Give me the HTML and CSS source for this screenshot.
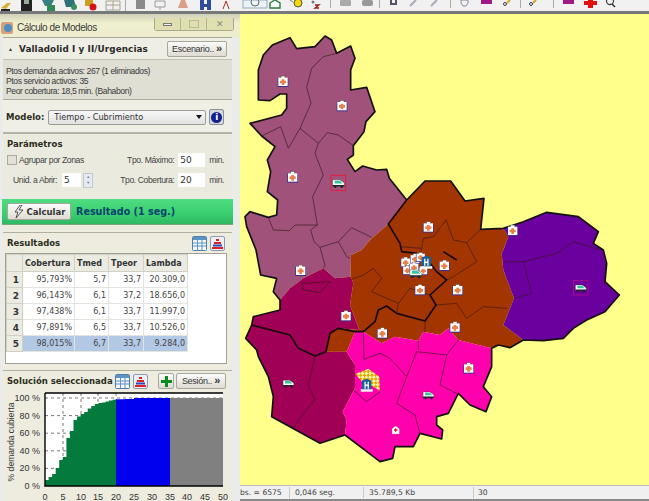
FILE: index.html
```html
<!DOCTYPE html>
<html lang="es">
<head>
<meta charset="utf-8">
<title>Cálculo de Modelos</title>
<link rel="stylesheet" href="styles.css">
</head>
<body>
<svg class="defs" width="0" height="0" aria-hidden="true">
  <defs>
    <symbol id="bag" viewBox="0 0 36 36">
      <rect x="12" y="1" width="12" height="8" fill="#fff" stroke="#554" stroke-width="2"/>
      <rect x="2" y="7" width="32" height="27" fill="#3a2f8a"/>
      <rect x="4" y="6" width="28" height="25" fill="#fff"/>
      <path d="M14 11h8v4h5v8h-5v5h-8v-5H9v-8h5z" fill="#e8804a"/>
    </symbol>
    <symbol id="amb" viewBox="0 0 44 36">
      <path d="M3 8h24l12 8 3 5v8H3z" fill="#fff" stroke="#333" stroke-width="1.5"/>
      <path d="M10 11h18l8 9H10z" fill="#35c49a"/>
      <path d="M3 25h39v5H3z" fill="#223"/>
      <circle cx="12" cy="31" r="4" fill="#222"/><circle cx="33" cy="31" r="4" fill="#222"/>
    </symbol>
    <symbol id="hosp" viewBox="0 0 40 44">
      <rect x="1" y="34" width="38" height="8" fill="#fff"/>
      <path d="M5 34V7l15-6 15 6v27z" fill="#1c5f94"/>
      <path d="M13 11h4v8h6v-8h4v22h-4v-9h-6v9h-4z" fill="#fff"/>
    </symbol>
    <pattern id="check" width="16" height="16" patternUnits="userSpaceOnUse" patternTransform="rotate(45)">
      <rect width="16" height="16" fill="#fff6b0"/>
      <rect width="8" height="8" fill="#e0a800"/>
      <rect x="8" y="8" width="8" height="8" fill="#e0a800"/>
    </pattern>
    <symbol id="grid" viewBox="0 0 15 15">
      <rect x=".5" y=".5" width="14" height="14" rx="1" fill="#f4f6fa" stroke="#4d7fa8"/>
      <rect x="1" y="1" width="13" height="3" fill="#5d93c4"/>
      <path d="M1 7h13M1 10h13M5.500 4v10M10 4v10" stroke="#5d93c4"/>
    </symbol>
    <symbol id="pyr" viewBox="0 0 15 15">
      <rect x=".5" y=".5" width="14" height="14" rx="1.500" fill="#eef0f6" stroke="#8c9ab0"/>
      <path d="M6 3h3v2H6zM4 6h7v2H4z" fill="#d22"/><path d="M3 8.500h9v2H3z" fill="#2a46b8"/><path d="M2 11h11v2H2z" fill="#d22"/>
    </symbol>
  </defs>
</svg>

<header class="toolbar">
  <svg class="toolbar-art" width="649" height="11" viewBox="0 0 649 11" aria-hidden="true">
    <path d="M1 8l6-5h4l-5 6z" fill="#d8b030"/><path d="M1 9h9v2H1z" fill="#222"/>
    <rect x="21" y="0" width="11" height="11" fill="#222"/><rect x="24" y="0" width="5" height="4" fill="#9a9"/>
    <path d="M42 0h12l-3 6h-6z" fill="#3a7f7f"/><rect x="47" y="5" width="8" height="6" fill="#2e8a55"/>
    <path d="M64 0h10l2 7H66z" fill="#2f6f7a"/><circle cx="74" cy="7" r="3" fill="#3a8f60"/>
    <path d="M85 0h8v6h-8z" fill="#c9a020"/><circle cx="93" cy="7" r="3.500" fill="#d31414"/>
    <path d="M106 1h14v9h-14zM106 5h14M113 1v9" fill="none" stroke="#a9a290"/>
    <rect x="125" y="0" width="1" height="11" fill="#aaa"/>
    <rect x="136" y="0" width="9" height="9" fill="#8a8a8a"/>
    <path d="M155 1h10v6h-10zM160 7v3" fill="none" stroke="#9a9a9a"/>
    <path d="M178 8l3-8h4l3 8z" fill="#d8a08a"/>
    <path d="M200 0h4v4h3V0h4v10h-4V7h-3v3h-4z" fill="#2d4d9c"/>
    <path d="M223 9l3-8 3 8" fill="none" stroke="#a03030"/>
    <rect x="243" y="0" width="24" height="8" fill="#eaf2fa" stroke="#98a8b8"/><circle cx="255" cy="2" r="4" fill="none" stroke="#666"/>
    <path d="M270 3l5-3 5 3v5h-10z" fill="#fff" stroke="#2b7a3d" stroke-width="1.400"/>
    <circle cx="298" cy="3" r="4" fill="#f0d800" stroke="#555"/><path d="M290 0l3 2" stroke="#777"/>
    <path d="M315 5h4l-4 3h4" fill="none" stroke="#a01818" stroke-width="1.300"/><circle cx="313" cy="2" r="1.500" fill="#777"/>
    <rect x="330" y="0" width="1" height="8" fill="#aaa"/>
    <rect x="340" y="0" width="11" height="6" rx="1" fill="#aaa"/><rect x="362" y="0" width="11" height="6" rx="2" fill="#999"/>
    <rect x="379" y="0" width="1" height="8" fill="#aaa"/>
    <path d="M390 0h2v3h3V0h2v5h-7z" fill="#556"/><path d="M410 6l6-6M431 6l6-6" stroke="#aab" stroke-width="2"/>
    <rect x="450" y="0" width="1" height="8" fill="#aaa"/>
    <path d="M461 0h7v3l-2 3h-3l-2-3z" fill="none" stroke="#889"/>
    <path d="M481 0h11v4h-11z" fill="#a0188a"/><circle cx="505" cy="4" r="1.500" fill="none" stroke="#444"/><path d="M507 3l3-3" stroke="#e0a030" stroke-width="2"/>
    <rect x="520" y="0" width="1" height="8" fill="#aaa"/>
    <circle cx="531" cy="4" r="1.500" fill="none" stroke="#246"/><path d="M533 3l3-3" stroke="#e0a030" stroke-width="2"/>
    <rect x="553" y="0" width="1" height="8" fill="#aaa"/>
    <path d="M563 0h11v4h-11z" fill="#a0188a"/>
    <path d="M588 0h5v1h4v4h-4v3h-5V5h-4V1h4z" fill="#e01010"/>
    <circle cx="610" cy="1" r="3.500" fill="none" stroke="#444" stroke-width="1.300"/><path d="M612 4l3 3" stroke="#333" stroke-width="1.600"/>
  </svg>
</header>

<div class="workspace">
  <aside class="panel">
    <div class="titlebar">
      <svg class="title-icon" width="12" height="12" viewBox="0 0 12 12" aria-hidden="true"><rect width="12" height="12" rx="2" fill="#d8a080"/><circle cx="7" cy="6" r="4" fill="#4f8fc0"/></svg>
      <span class="title-text">Cálculo de Modelos</span>
      <div class="window-buttons">
        <span class="wbtn"><i class="wmin"></i></span>
        <span class="wbtn"><i class="wmax"></i></span>
        <span class="wbtn wclose">&#10005;</span>
      </div>
    </div>
    <div class="panel-body">
      <section class="scenario">
        <div class="scenario-head">
          <span class="collapse">&#9650;</span>
          <strong class="scenario-name">Valladolid I y II/Urgencias</strong>
          <button class="btn btn-scenario">Escenario.. <b>&raquo;</b></button>
        </div>
        <div class="scenario-info">
          <div>Ptos demanda activos: 267 (1 eliminados)</div>
          <div>Ptos servicio activos: 35</div>
          <div>Peor cobertura: 18,5 min. (Bahabon)</div>
        </div>
      </section>

      <div class="model-row">
        <strong class="heading">Modelo:</strong>
        <div class="select"><span>Tiempo - Cubrimiento</span><i class="caret"></i></div>
        <span class="info-btn"><span class="info-dot">i</span></span>
      </div>

      <section class="params">
        <strong class="heading">Parámetros</strong>
        <div class="param-row">
          <label class="check"><i class="box"></i>Agrupar por Zonas</label>
          <span class="param-right"><span>Tpo. Máximo:</span><span class="input">50</span><span>min.</span></span>
        </div>
        <div class="param-row">
          <span class="unid">
            <span>Unid. a Abrir:</span><span class="input input-small">5</span>
            <span class="spin"><i>&#9650;</i><i>&#9660;</i></span>
          </span>
          <span class="param-right"><span>Tpo. Cobertura:</span><span class="input">20</span><span>min.</span></span>
        </div>
      </section>

      <div class="run-band">
        <button class="btn btn-run">
          <svg width="11" height="13" viewBox="0 0 11 13" aria-hidden="true"><path d="M7 0L2 7h3l-2 6 7-8H6l3-5z" fill="#eee" stroke="#333" stroke-width=".8"/></svg>
          Calcular
        </button>
        <strong class="run-result">Resultado (1 seg.)</strong>
      </div>

      <section class="results">
        <div class="section-head">
          <strong class="heading">Resultados</strong>
          <span class="icon-pair">
            <svg class="ico" viewBox="0 0 15 15"><use href="#grid"/></svg>
            <svg class="ico" viewBox="0 0 15 15"><use href="#pyr"/></svg>
          </span>
        </div>
        <div class="table-wrap">
          <table class="results-table">
            <thead>
              <tr><th class="rowh"></th><th class="c1">Cobertura</th><th class="c2">Tmed</th><th class="c3">Tpeor</th><th class="c4">Lambda</th></tr>
            </thead>
            <tbody>
              <tr><th class="rowh">1</th><td>95,793%</td><td>5,7</td><td>33,7</td><td>20.309,0</td></tr>
              <tr><th class="rowh">2</th><td>96,143%</td><td>6,1</td><td>37,2</td><td>18.656,0</td></tr>
              <tr><th class="rowh">3</th><td>97,438%</td><td>6,1</td><td>33,7</td><td>11.997,0</td></tr>
              <tr><th class="rowh">4</th><td>97,891%</td><td>6,5</td><td>33,7</td><td>10.526,0</td></tr>
              <tr class="selected"><th class="rowh">5</th><td>98,015%</td><td>6,7</td><td>33,7</td><td>9.284,0</td></tr>
            </tbody>
          </table>
        </div>
      </section>

      <section class="solution">
        <div class="solution-head">
          <strong class="heading">Solución seleccionada</strong>
          <svg class="ico" viewBox="0 0 15 15"><use href="#grid"/></svg>
          <svg class="ico" viewBox="0 0 15 15"><use href="#pyr"/></svg>
          <span class="btn btn-plus"><svg width="11" height="11" viewBox="0 0 11 11" aria-hidden="true"><path d="M4 0h3v4h4v3H7v4H4V7H0V4h4z" fill="#0b8a1e"/></svg></span>
          <button class="btn btn-session">Sesión.. <b>&raquo;</b></button>
        </div>
        <svg class="chart" width="232" height="111" viewBox="0 0 232 111">
          <rect x="45" y="3" width="178" height="93" fill="#fff"/>
          <path d="M45 8H223M45 25.600H223M45 43.200H223M45 60.800H223M45 78.400H223M63 3V96M81 3V96M98 3V96M116 3V96" stroke="#555" stroke-dasharray="3 3" stroke-width=".8" fill="none"/>
          <path d="M45 96V90H48.600V87H52.100V84H55.700V78H59.200V70H62.800V67H66.400V48H69.900V41H73.500V30H77V26.500H80.600V24H84.200V22H87.700V18.500H91.300V16H94.800V14H98.400V13H102V12.400H105.500V11.500H109V10.600H112.600V9.800H116V96z" fill="#047a3c"/>
          <path d="M116 96V9.300H125V9H134V8H170V96z" fill="#0000ee"/>
          <rect x="170" y="8" width="53" height="88" fill="#808080"/>
          <path d="M45 3H223M45 3V96H223" fill="none" stroke="#000" stroke-width="1.400"/>
          <g class="chart-y">
            <text x="40" y="11">100 %</text><text x="40" y="29">80 %</text><text x="40" y="46">60 %</text>
            <text x="40" y="64">40 %</text><text x="40" y="81">20 %</text><text x="40" y="99">0 %</text>
          </g>
          <g class="chart-x">
            <text x="45" y="110">0</text><text x="63" y="110">5</text><text x="81" y="110">10</text><text x="98" y="110">15</text>
            <text x="116" y="110">20</text><text x="134" y="110">25</text><text x="152" y="110">30</text><text x="170" y="110">35</text>
            <text x="187" y="110">40</text><text x="205" y="110">45</text><text x="223" y="110">50</text>
          </g>
          <text class="chart-title" transform="translate(14 52) rotate(-90)">% demanda cubierta</text>
        </svg>
      </section>
    </div>
  </aside>

  <main class="map-column">
    <svg class="map" viewBox="0 42 1227 1413" preserveAspectRatio="none" role="img" aria-label="Mapa de zonas">
      <polygon class="z-mauve" points="55,210 70,165 97,135 150,113 170,146 225,140 255,108 275,120 290,160 332,138 345,175 332,210 332,270 380,262 405,335 378,365 372,395 340,437 340,465 322,478 345,515 368,498 410,510 440,508 448,535 500,600 445,672 390,720 365,750 333,765 332,830 285,835 250,805 190,835 150,865 120,900 100,875 110,835 62,825 48,750 20,680 15,650 30,635 85,652 110,645 113,600 82,575 92,515 82,480 105,440 65,408 30,370 125,345 140,325 140,282 120,282 90,302 55,300"/>
      <polygon class="z-brown" points="500,600 555,543 632,543 675,603 732,595 722,688 790,685 805,710 790,750 785,760 790,810 822,895 790,975 850,1020 810,1043 775,1035 755,1045 655,1020 625,985 600,1005 550,995 535,1022 465,1010 425,1030 370,995 345,995 320,1055 258,1055 270,1000 295,985 358,990 330,915 340,850 332,830 333,765 365,750 390,720 445,672"/>
      <polygon class="z-purple" points="790,685 850,665 920,637 1015,650 1075,695 1060,730 1090,750 1100,790 1095,845 1138,885 1095,935 1040,960 1000,985 970,1015 910,1022 850,1020 790,975 822,895 790,810 785,760 790,750 805,710"/>
      <polygon class="z-wine" points="332,830 340,850 330,915 358,990 295,985 270,1000 258,1055 320,1055 345,1095 345,1165 308,1235 320,1260 315,1305 240,1330 158,1285 95,1250 100,1190 85,1130 55,1070 50,1050 17,1015 35,975 40,950 120,930 120,900 150,865 190,835 250,805 285,835"/>
      <polygon class="z-pink" points="345,995 370,995 425,1030 465,1010 535,1022 550,995 600,1005 625,985 655,1020 755,1045 755,1100 730,1160 755,1190 738,1235 690,1215 655,1180 625,1240 590,1250 590,1275 608,1290 605,1317 540,1300 520,1340 465,1340 458,1375 420,1385 315,1305 320,1260 308,1235 345,1165 345,1095 320,1055"/>

      <path class="thin" d="M290 160L250 170 215 205 200 262 213 310 180 385 145 445 122 380 65 408M180 385L235 430 262 398 295 405 340 437M235 430L225 460 250 525 218 590 232 675 212 690 222 725 240 742 295 725 335 683 395 712M232 675L165 675 148 692 100 690 85 652M240 742L255 795 250 805M295 725L320 770 330 775"/>
      <path class="thin" d="M480 740L545 745 550 715 580 710 618 660 640 720 680 728 722 688M680 728L710 785 640 830 620 840M545 745L540 770M330 840L370 825 400 805 425 835 395 875 475 910 470 940M475 910L510 865 570 885M588 915L650 910 680 955 730 920 800 925M555 963L555 995M790 785H850L875 880 822 895M850 785L950 760 1000 725 1085 750"/>
      <path class="thin" d="M370 1000L372 1078 420 1060 450 1075 500 1130 470 1210 525 1245 540 1300M500 1130L530 1055 620 1065 655 1020M535 1022V1050M620 1065L600 1155 650 1180M340 1170L380 1205 420 1175"/>
      <path class="thin" d="M225 1068L205 1155 225 1200 190 1240 158 1285M185 850L270 845 240 878 190 870z"/>

      <path class="outer" d="M55 210L70 165 97 135 150 113 170 146 225 140 255 108 275 120 290 160 332 138 345 175 332 210 332 270 380 262 405 335 378 365 372 395 340 437 340 465 322 478 345 515 368 498 410 510 440 508 448 535 500 600 555 543 632 543 675 603 732 595 722 688 790 685 850 665 920 637 1015 650 1075 695 1060 730 1090 750 1100 790 1095 845 1138 885 1095 935 1040 960 1000 985 970 1015 910 1022 850 1020 810 1043 775 1035 755 1045 755 1100 730 1160 755 1190 738 1235 690 1215 655 1180 625 1240 590 1250 590 1275 608 1290 605 1317 540 1300 520 1340 465 1340 458 1375 420 1385 315 1305 240 1330 158 1285 95 1250 100 1190 85 1130 55 1070 50 1050 17 1015 35 975 40 950 120 930 120 900 100 875 110 835 62 825 48 750 20 680 15 650 30 635 85 652 110 645 113 600 82 575 92 515 82 480 105 440 65 408 30 370 125 345 140 325 140 282 120 282 90 302 55 300z"/>
      <path class="thick" d="M35 975L150 1005 175 1045 225 1068 258 1055 270 1000 295 985 345 995 370 995 405 965 415 930 440 918 470 940 555 963 588 915 570 885 620 840 590 815 570 790M500 600L445 672 480 730 485 755 530 760M610 755L650 780"/>

      <polygon class="checker" points="346,1122 385,1106 418,1130 420,1172 400,1160 370,1150"/>

      <g class="cluster">
        <use href="#bag" x="480" y="770" width="34" height="34"/>
        <use href="#bag" x="486" y="795" width="32" height="32"/>
        <use href="#bag" x="508" y="760" width="34" height="34"/>
        <use href="#bag" x="526" y="756" width="32" height="32"/>
        <use href="#bag" x="535" y="797" width="30" height="30"/>
        <use href="#bag" x="505" y="785" width="34" height="34"/>
        <use href="#amb" x="505" y="802" width="44" height="34"/>
        <use href="#hosp" x="540" y="765" width="38" height="44"/>
      </g>
      <use href="#bag" x="111" y="227" width="36" height="36"/>
      <use href="#bag" x="288" y="300" width="36" height="36"/>
      <use href="#bag" x="140" y="514" width="36" height="36"/>
      <use href="#bag" x="547" y="664" width="36" height="36"/>
      <use href="#bag" x="800" y="674" width="36" height="36"/>
      <use href="#bag" x="164" y="794" width="36" height="36"/>
      <use href="#bag" x="300" y="930" width="36" height="36"/>
      <use href="#bag" x="409" y="982" width="36" height="36"/>
      <use href="#bag" x="522" y="852" width="36" height="36"/>
      <use href="#bag" x="635" y="852" width="36" height="36"/>
      <use href="#bag" x="595" y="779" width="36" height="36"/>
      <use href="#bag" x="627" y="964" width="36" height="36"/>
      <use href="#bag" x="668" y="1087" width="36" height="36"/>

      <rect class="mark-red" x="273" y="526" width="44" height="46"/>
      <use href="#amb" x="275" y="532" width="40" height="33"/>
      <rect class="mark-wine" x="1000" y="841" width="44" height="44"/>
      <use href="#amb" x="1003" y="848" width="38" height="30"/>
      <use href="#amb" x="126" y="1134" width="38" height="30"/>
      <use href="#amb" x="546" y="1169" width="38" height="30"/>
      <use href="#hosp" x="361" y="1134" width="38" height="44"/>
      <path class="home" d="M467 1278l11 8v16h-22v-16z"/>
      <path class="home-cross" d="M465 1285h4v3h3v4h-3v3h-4v-3h-3v-4h3z"/>
    </svg>
    <footer class="statusbar">
      <span class="st st1">bs. = 6575</span>
      <span class="st st2">0,046 seg.</span>
      <span class="st st3">35.789,5 Kb</span>
      <span class="st st4">30</span>
    </footer>
  </main>
</div>
</body>
</html>
```
FILE: styles.css
```css
* { box-sizing: border-box; }
html, body { margin: 0; padding: 0; width: 649px; height: 501px; overflow: hidden; }
body {
  display: flex; flex-direction: column;
  font-family: "Liberation Sans", Arial, sans-serif;
  font-size: 9px; color: #333; background: #f0f0f0;
}
.defs { position: absolute; }
.toolbar { height: 14px; flex: none; background: #f1f1f1; border-bottom: 3px solid #77787a; }
.toolbar-art { display: block; }
.workspace { flex: 1; display: flex; min-height: 0; }

.panel {
  width: 240px; flex: none; display: flex; flex-direction: column;
  background: #e9ecea; overflow: hidden; padding: 0 8px 0 3px;
}
.titlebar {
  height: 23px; flex: none; display: flex; align-items: center;
  margin: 0 -8px 0 -3px; padding: 4px 6px 0 1px;
  background: linear-gradient(#cfd0b8, #f0f0d0 40%, #ecedcd);
  font-size: 10px; color: #3a3a3a;
}
.title-icon { margin-right: 4px; }
.title-text { flex: 1; font-size: 10px; letter-spacing: -.45px; }
.window-buttons { display: flex; height: 13px; margin-top: -6px; border: 1px solid #aaa98c; border-top: 0; border-radius: 0 0 3px 3px; }
.wbtn { width: 26px; display: flex; align-items: center; justify-content: center; border-right: 1px solid #b5b49a; background: #e0dfb0; }
.wclose { border-right: 0; color: #888; font-size: 9px; }
.wmin { width: 9px; height: 3px; border: 1px solid #777; background: #eee; }
.wmax { width: 10px; height: 8px; border: 1px solid #b8b8a0; }

.panel-body { flex: 1; display: flex; flex-direction: column; background: #edecdf; min-height: 0; }
.heading { font-family: "DejaVu Sans", sans-serif; font-weight: 700; font-size: 8.500px; color: #2c2c20; }

.scenario-head {
  height: 22px; display: flex; align-items: center; padding: 0 5px 0 5px;
  border-top: 1px solid #a9a99a; background: #eeeee4;
}
.collapse { font-size: 5px; color: #333; margin-right: 6px; }
.scenario-name { flex: 1; font-family: "DejaVu Sans", sans-serif; font-size: 8.800px; color: #2a2a2a; letter-spacing: .1px; }
.btn {
  font-family: "Liberation Sans", Arial, sans-serif; font-size: 9px; color: #333; letter-spacing: -.3px;
  background: linear-gradient(#fbfbfb, #dedcd2); border: 1px solid #a8a79c; border-radius: 2px; padding: 0;
}
.btn b { color: #333; font-size: 11px; line-height: 9px; }
.btn-scenario { width: 60px; height: 16px; }
.scenario-info {
  height: 41px; padding: 7px 3px 0; background: #dfdfd4; line-height: 9.800px;
  font-size: 8.600px; color: #3a3a3a; letter-spacing: -.4px;
  border-top: 1px solid #c0c0b4; border-bottom: 1px solid #a9a99a;
}

.model-row { height: 34px; display: flex; align-items: center; padding: 2px 4px 0 3px; border-bottom: 2px solid #b5b5a5; background: #f0efe6; }
.select {
  width: 158px; height: 15px; margin-left: 4px; display: flex; align-items: center; justify-content: space-between;
  padding: 0 3px 0 5px; background: linear-gradient(#f7f7f7, #e2e2e2); border: 1px solid #9b9b9b; border-radius: 2px;
  font-family: "DejaVu Sans", sans-serif; font-size: 8.200px; color: #333;
}
.caret { width: 0; height: 0; border: 3px solid transparent; border-top: 4px solid #111; border-bottom: 0; }
.info-btn { width: 15px; height: 16px; margin-left: 3px; display: flex; align-items: center; justify-content: center; background: #d4d8de; border: 1px solid #8a8f9a; border-radius: 2px; }
.info-dot { width: 11px; height: 11px; border-radius: 50%; background: #14208c; color: #fff; font: 700 9px/11px "DejaVu Sans", sans-serif; text-align: center; }

.params { height: 65px; padding: 5px 3px 0 4px; display: flex; flex-direction: column; background: #ebeade; }
.params .heading { margin-bottom: 1px; }
.param-row { height: 20px; display: flex; align-items: center; justify-content: space-between; padding-right: 5px; flex: none; }
.check { display: flex; align-items: center; color: #444; font-size: 8.600px; letter-spacing: -.4px; }
.box { width: 10px; height: 10px; margin-right: 2px; border: 1px solid #aaa; background: #e2e0d4; }
.param-right { display: flex; align-items: center; gap: 3px; font-size: 8.600px; color: #444; letter-spacing: -.4px; }
.input { width: 27px; height: 14px; padding-left: 2px; margin: 0 1px 0 1px; background: #fff; font: 9px/14px "DejaVu Sans", sans-serif; color: #333; letter-spacing: 0; }
.unid { display: flex; align-items: center; padding-left: 6px; font-size: 8.600px; color: #444; letter-spacing: -.4px; }
.input-small { width: 19px; margin-left: 5px; }
.spin { width: 10px; height: 15px; display: flex; flex-direction: column; border: 1px solid #bcc; margin-left: 1px; background: #e8eaf2; }
.spin i { flex: 1; font-style: normal; font-size: 4px; line-height: 6px; text-align: center; color: #789; }

.run-band {
  height: 26px; flex: none; display: flex; align-items: center; padding: 0 5px;
  margin: 0 -1px; background: linear-gradient(#4fdc80, #38cf70 60%, #2fb862);
  border-bottom: 1px solid #78a878;
}
.btn-run { width: 64px; height: 17px; display: flex; align-items: center; justify-content: center; gap: 3px; font: 700 8.500px "DejaVu Sans", sans-serif; color: #333; letter-spacing: 0; }
.run-result { margin-left: 5px; font-family: "DejaVu Sans", sans-serif; font-size: 9.600px; color: #07436e; }

.results { height: 133px; flex: none; margin-top: 7px; padding: 0 5px 0 2px; border-top: 1px solid #b0b0a0; display: flex; flex-direction: column; }
.section-head { height: 20px; flex: none; margin-top: 0; display: flex; align-items: center; justify-content: space-between; padding: 0 2px 0 2px; }
.icon-pair { display: flex; gap: 3px; }
.ico { width: 15px; height: 15px; flex: none; }
.table-wrap { height: 111px; flex: none; background: #fff; border: 1px solid #a0a098; }
.results-table { border-collapse: collapse; table-layout: fixed; width: 181px; font-family: "DejaVu Sans", sans-serif; font-size: 8px; color: #444; }
.results-table th { background: #ecebe2; font-weight: 700; color: #333; border: 1px solid #d0d0c4; padding: 0 2px; height: 16px; text-align: left; font-size: 8px; }
.results-table thead th { height: 17px; }
.results-table td { text-align: right; padding: 0 2px; border: 1px solid #e4e4de; height: 16px; }
.results-table .rowh { width: 16px; text-align: right; }
.c1 { width: 52px; } .c2 { width: 34px; } .c3 { width: 35px; } .c4 { width: 44px; }
.results-table tbody .rowh { padding-right: 3px; font-size: 9px; }
.selected td { background: #b3c8e4; }

.solution { flex: 1; margin-top: 5px; padding: 1px 0 0; border-top: 1px solid #b0b0a0; min-height: 0; background: #edecdf; }
.solution-head { height: 18px; display: flex; align-items: center; padding: 0 5px 0 4px; }
.solution-head .heading { width: 108px; white-space: nowrap; }
.solution-head .ico + .ico { margin-left: 3px; }
.btn-plus { width: 16px; height: 16px; margin-left: 10px; display: flex; align-items: center; justify-content: center; }
.btn-session { width: 50px; height: 16px; margin-left: 2px; }
.chart { display: block; margin-left: -3px; }
.chart text { font-family: "Liberation Sans", Arial, sans-serif; font-size: 9px; fill: #333; }
.chart-y text { text-anchor: end; }
.chart-x text { text-anchor: middle; }
.chart .chart-title { text-anchor: middle; font-size: 8.600px; }

.map-column { flex: 1; display: flex; flex-direction: column; min-width: 0; }
.map { display: block; width: 409px; height: 471px; flex: none; background: #ffff8c; }
.z-mauve { fill: #a0527a; }
.z-brown { fill: #a33500; }
.z-purple { fill: #6a009e; }
.z-wine { fill: #a00055; }
.z-pink { fill: #ff00ac; }
.thin { fill: none; stroke: #3a1a20; stroke-width: 2; stroke-linejoin: round; }
.outer { fill: none; stroke: #111; stroke-width: 5; stroke-linejoin: round; }
.thick { fill: none; stroke: #16080a; stroke-width: 5; stroke-linejoin: round; }
.checker { fill: url(#check); }
.mark-red { fill: none; stroke: #e0203a; stroke-width: 3; }
.mark-wine { fill: none; stroke: #c0108a; stroke-width: 2; }
.home { fill: #fff; stroke: #888; stroke-width: 1; }
.home-cross { fill: #d02030; }

.statusbar {
  height: 16px; flex: none; display: flex; align-items: center;
  background: #f0f0f0; border-top: 1px solid #bcbcbc; border-bottom: 2px solid #8a8a8a;
  font-family: "DejaVu Sans", sans-serif; font-size: 7.600px; color: #444;
}
.st { display: block; height: 11px; line-height: 11px; border-right: 1px solid #c8c8c8; white-space: nowrap; }
.st1 { width: 50px; }
.st2 { width: 74px; padding-left: 5px; }
.st3 { width: 110px; padding-left: 5px; }
.st4 { border: 0; padding-left: 4px; }
```
